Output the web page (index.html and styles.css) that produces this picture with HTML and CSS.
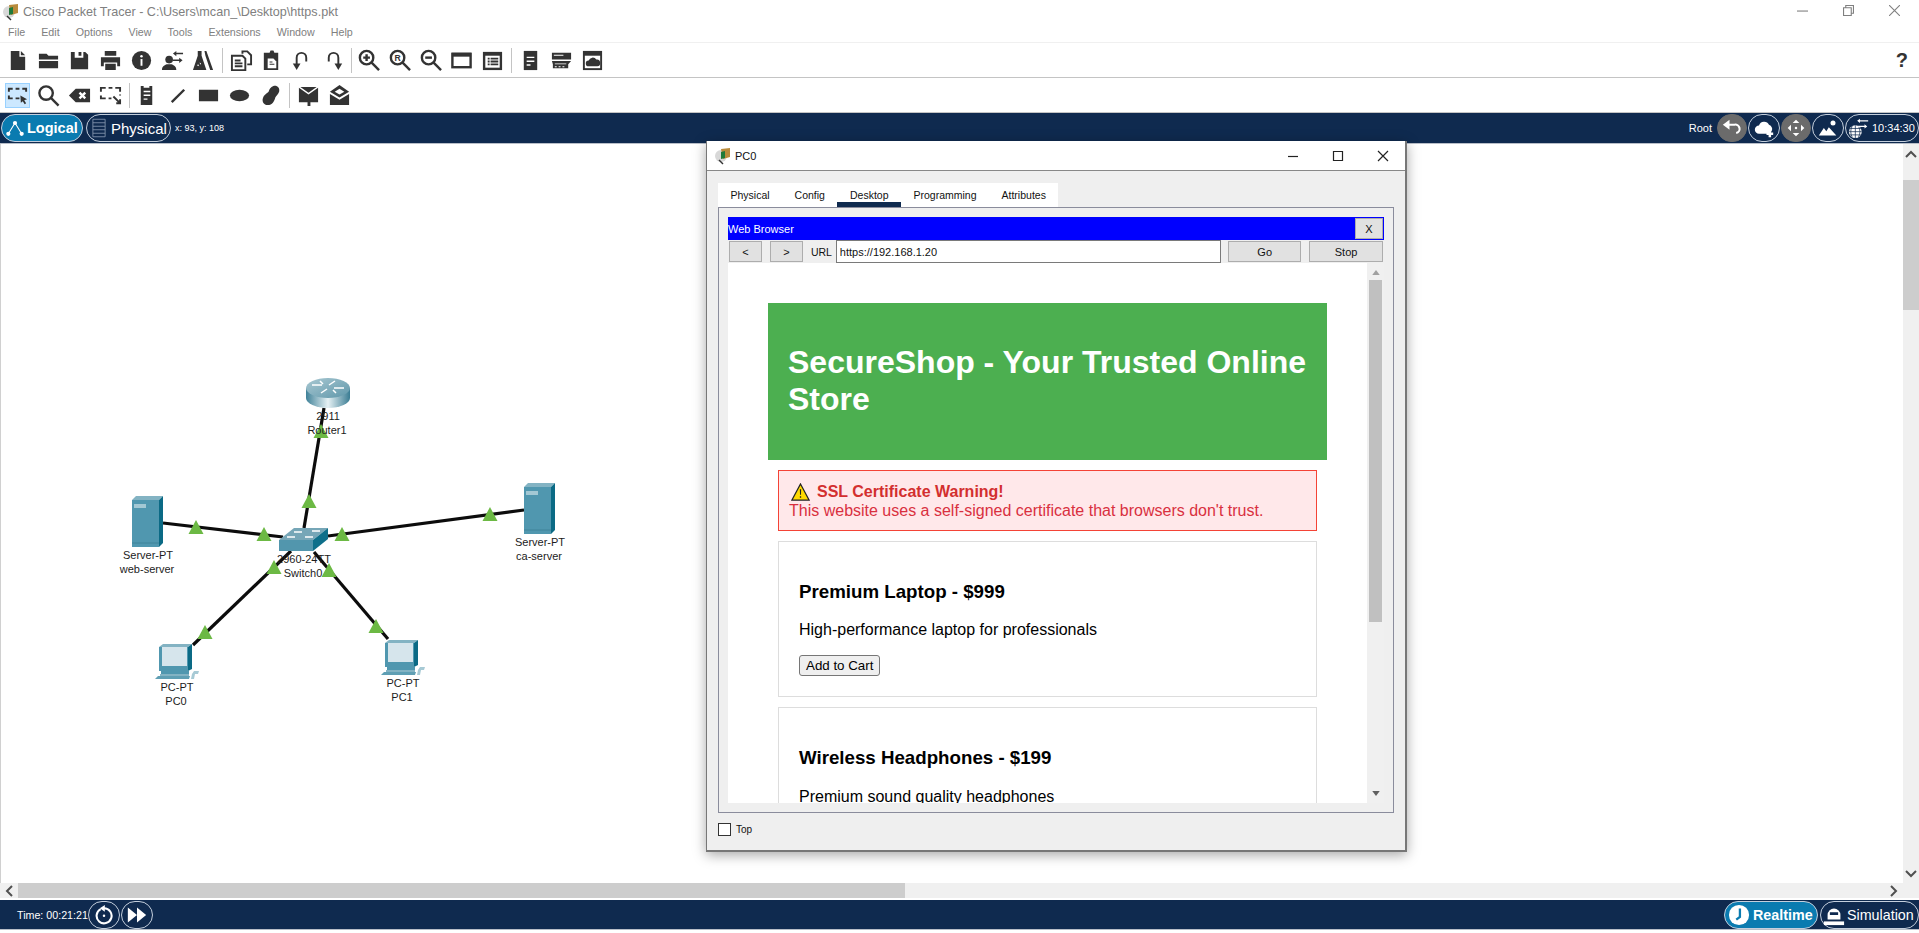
FILE: index.html
```html
<!DOCTYPE html>
<html lang="en">
<head>
    <meta charset="UTF-8">
    <title>Cisco Packet Tracer - https.pkt</title>
    <link rel="stylesheet" href="styles.css">
</head>
<body>

<div class="app">

    <div class="titlebar">
        <svg class="app-icon" viewBox="0 0 18 18">
            <circle cx="7" cy="9" r="6" fill="#d8d8d8"/>
            <path d="M7 2l9-1v9l-7 2z" fill="#b98b3c"/>
            <path d="M7 5l4-1v7l-4 1z" fill="#1f7a3a"/>
            <path d="M5 13l4 4" stroke="#333" stroke-width="1.5"/>
        </svg>
        <span class="app-title">Cisco Packet Tracer - C:\Users\mcan_\Desktop\https.pkt</span>
        <div class="win-controls">
            <svg viewBox="0 0 10 10"><path d="M0 5.5h10"/></svg>
            <svg viewBox="0 0 10 10"><path d="M.5 2.5h7v7h-7zM2.5 2.5v-2h7v7h-2"/></svg>
            <svg viewBox="0 0 10 10"><path d="M0 0l10 10M10 0L0 10"/></svg>
        </div>
    </div>

    <nav class="menubar">
        <span>File</span><span>Edit</span><span>Options</span><span>View</span><span>Tools</span><span>Extensions</span><span>Window</span><span>Help</span>
    </nav>

    <div class="toolbar">
        <span class="tool"><svg viewBox="0 0 24 24"><path d="M5 2h9v6h6v14H5zM15.500 2l4.500 4.500h-4.500z"/></svg></span>
        <span class="tool"><svg viewBox="0 0 24 24"><path d="M2 5h8l2 2h10v4H2zM2 12.500h20V20H2z"/></svg></span>
        <span class="tool"><svg viewBox="0 0 24 24"><path d="M3 3h4v6h9V3h2l3 3v15H3zM11 3h3v4h-3z"/></svg></span>
        <span class="tool"><svg viewBox="0 0 24 24"><path d="M6 2h12v5H6zM2 8.500h20V18h-3v-4H5v4H2zM6.500 15.500h11V22h-11z"/></svg></span>
        <span class="tool"><svg viewBox="0 0 24 24"><circle cx="12" cy="12" r="10"/><rect class="w" x="11" y="10.500" width="2" height="7"/><circle class="w" cx="12" cy="7.500" r="1.300"/></svg></span>
        <span class="tool"><svg viewBox="0 0 24 24"><circle cx="8.500" cy="11" r="4"/><path d="M1 22c0-4 3-5 5-6h5c2 1 5 2 5 6zM16 2v2h7v1.500h-7v2l-3.500-2.700zM19 9v2h-7v1.500h7v2l3.500-2.700z"/></svg></span>
        <span class="tool"><svg viewBox="0 0 24 24"><path d="M6 2h4v5l5 15H1l5-15zM13 2h2l7 20h-3L14 7z"/><path class="w" d="M5 17l1.500-1 1 2zM8 14l1.500 1-1 1.500z"/></svg></span>
        <span class="sep"></span>
        <span class="tool"><svg class="ln thin" viewBox="0 0 24 24"><path d="M13 5V2.500h5l4 4V16h-4M2 7h11l3 3v12H2z"/><path d="M5 12h6M5 15h8M5 18h8"/></svg></span>
        <span class="tool narrow"><svg viewBox="0 0 24 24"><path d="M7 4h3l1-2.500h3l1 2.500h4v18H4V4z"/><path class="w" d="M8 10h6l3 3v7H8z"/><path d="M10 13h3v1h-3zM10 15.500h5v1h-5z"/></svg></span>
        <span class="tool narrow"><svg class="ln thin" viewBox="0 0 24 24"><path d="M18 13V9a5 5 0 0 0-10 0v7"/><path class="f" d="M4 15h8l-4 7z"/></svg></span>
        <span class="tool redo"><svg class="ln thin" viewBox="0 0 24 24"><path d="M6 13V9a5 5 0 0 1 10 0v7"/><path class="f" d="M12 15h8l-4 7z"/></svg></span>
        <span class="sep sep-tight"></span>
        <span class="tool"><svg class="ln" viewBox="0 0 24 24"><circle cx="10" cy="9" r="7"/><path d="M15 14l8 8"/><path d="M6.500 9h7M10 5.500v7"/></svg></span>
        <span class="tool"><svg class="ln" viewBox="0 0 24 24"><circle cx="10" cy="9" r="7"/><path d="M15 14l8 8"/><text class="tool-r" x="10" y="12.500" text-anchor="middle">R</text></svg></span>
        <span class="tool"><svg class="ln" viewBox="0 0 24 24"><circle cx="10" cy="9" r="7"/><path d="M15 14l8 8"/><path d="M6.500 9h7"/></svg></span>
        <span class="tool"><svg class="ln" viewBox="0 0 24 24"><rect x="2.500" y="5" width="19" height="14"/><path d="M2 6h20" stroke-width="4"/></svg></span>
        <span class="tool"><svg viewBox="0 0 24 24"><path d="M2 3h20v19H2z"/><path class="w" d="M4.500 7h15v12.500h-15z"/><path d="M7 9h2v2H7zM7 12h2v2H7zM7 15h2v2H7zM10 9h8v2h-8zM10 12h8v2h-8zM10 15h8v2h-8z"/></svg></span>
        <span class="sep"></span>
        <span class="tool"><svg viewBox="0 0 24 24"><path d="M5 2h14v20H5z"/><path class="w" d="M8 8h8v1.500H8zM8 12h8v1.500H8zM8 16h4v1.500H8z"/></svg></span>
        <span class="tool"><svg viewBox="0 0 24 24"><path d="M2 4h20v7H2zM2 12.500h20L19 16v4H3v-4z"/><path class="w" d="M4 6h10v1H4zM5 15h12v1H5zM5 18h2v1H5zM9 18h2v1H9zM13 18h2v1h-2z"/></svg></span>
        <span class="tool"><svg viewBox="0 0 24 24"><path d="M2 2h20v20H2z"/><path class="w" d="M4 7h16v13H4z"/><path d="M8 18a3 3 0 0 1 0-6 4.500 4.500 0 0 1 8-1 3.500 3.500 0 0 1 1 7z"/></svg></span>
        <span class="help">?</span>
    </div>

    <div class="toolbar">
        <span class="tool active"><svg class="ln thin" viewBox="0 0 24 24"><path d="M3 8V5h4M10 5h4M17 5h4v3M3 12v3h4M10 15h4"/><path class="f" d="M15 12l7 4-3 1 2 3-1.500 1-2-3-2 1.500z"/></svg></span>
        <span class="tool"><svg class="ln" viewBox="0 0 24 24"><circle cx="9.500" cy="9.500" r="7"/><path d="M14.500 14.500l8 8"/></svg></span>
        <span class="tool"><svg viewBox="0 0 24 24"><path d="M8 5h15v14H8l-7-7z"/><path class="wl" d="M12 9l6 6M18 9l-6 6"/></svg></span>
        <span class="tool"><svg class="ln thin" viewBox="0 0 24 24"><path d="M2 8V4h5M10 4h4M17 4h5v4M2 12v3h5M10 15h3M22 11v1"/><path d="M15 13l7 7M18 20h4v-4"/></svg></span>
        <span class="sep sep-note"></span>
        <span class="tool"><svg viewBox="0 0 24 24"><path d="M6 2h3v2h6V2h3v20H6z"/><path class="w" d="M9 7h7v1.500H9zM9 11h7v1.500H9zM9 15h4v1.500H9z"/></svg></span>
        <span class="tool"><svg class="ln" viewBox="0 0 24 24"><path d="M6 19L19 6"/></svg></span>
        <span class="tool"><svg viewBox="0 0 24 24"><rect x="2" y="6" width="20" height="12"/></svg></span>
        <span class="tool"><svg viewBox="0 0 24 24"><ellipse cx="12" cy="12" rx="10" ry="6"/></svg></span>
        <span class="tool"><svg viewBox="0 0 24 24"><path d="M15 2c4-1 7 2 6 6-1 3-3 4-4 6-1 4-3 8-8 8-4 0-6-4-5-7 1-4 4-5 6-7 1-3 2-5 5-6z"/></svg></span>
        <span class="sep"></span>
        <span class="tool"><svg viewBox="0 0 24 24"><path d="M2 4l10 7 10-7v15H14v4h-3v-4H2zM3.500 3h17L12 9z"/></svg></span>
        <span class="tool"><svg viewBox="0 0 24 24"><path d="M12 1l10 7-10 6L2 8zM2 10.500l10 6 10-6V22H2z"/><path class="w" d="M12 5l5 3-5 3-5-3z"/></svg></span>
    </div>

    <div class="navbar">
        <div class="pill pill-on logical">
            <svg viewBox="0 0 24 24"><path class="nv-thin" d="M12 6L4 19M12 6l8 13"/><circle cx="12" cy="6" r="2.500"/><circle cx="4" cy="19" r="2.500"/><circle cx="20" cy="19" r="2.500"/></svg>
            <b>Logical</b>
        </div>
        <div class="pill physical">
            <svg viewBox="0 0 16 22"><path class="rack" d="M1 1h14v20H1zM1 5h14M1 9h14M1 13h14M1 17h14"/></svg>
            <span>Physical</span>
        </div>
        <span class="coords">x: 93, y: 108</span>
        <div class="nav-right">
            <span class="root">Root</span>
            <div class="round grey"><svg viewBox="0 0 24 24"><path class="nv" d="M5 8h10a5 5 0 0 1 2 10"/><path d="M9 2v12L1 8z"/></svg></div>
            <div class="round"><svg viewBox="0 0 24 24"><path d="M6 19a5 5 0 0 1 0-10 6.500 6.500 0 0 1 12-1 5.500 5.500 0 0 1 3 8l-3 3z"/><path class="wn" d="M19 15v8M15 19h8"/></svg></div>
            <div class="round grey"><svg viewBox="0 0 24 24"><path d="M12 2l4 4H8zM12 22l-4-4h8zM2 12l4-4v8zM22 12l-4 4V8z"/><circle cx="12" cy="12" r="1.500"/></svg></div>
            <div class="round"><svg viewBox="0 0 24 24"><circle cx="18" cy="6" r="3"/><path d="M1 21l6-9 3 4 3-5 9 10z"/></svg></div>
            <div class="round clock">
                <svg viewBox="0 0 24 24"><circle cx="8" cy="16" r="7"/><path class="gridline" d="M1 16h14M2 12.500h12M2 19.500h12M8 9v14M4.500 10c-2 4-2 8 0 12M11.500 10c2 4 2 8 0 12"/><path d="M13 2v1.500h9V5h-9v1.500L10 4zM18 8v1.500H11V11h7v1.500l3-2.200z"/></svg>
                <span>10:34:30</span>
            </div>
        </div>
    </div>

    <div class="workspace">
        <div class="canvas">
            <svg class="topology" viewBox="0 144 1902 739">
                <defs>
                    <linearGradient id="routerSide" x1="0" x2="1" y1="0" y2="0">
                        <stop offset="0" stop-color="#3f8198"/>
                        <stop offset="0.5" stop-color="#e6f1f4"/>
                        <stop offset="1" stop-color="#3a7c93"/>
                    </linearGradient>
                    <linearGradient id="routerTop" x1="0" x2="1" y1="0" y2="1">
                        <stop offset="0" stop-color="#a9c8d2"/>
                        <stop offset="1" stop-color="#5f97aa"/>
                    </linearGradient>
                    <g id="server">
                        <path d="M0 4h27v47H0z" fill="#5097af"/>
                        <path d="M0 4l4-4h27l-4 4z" fill="#83b3c3"/>
                        <path d="M27 4l4-4v47l-4 4z" fill="#0b6a85"/>
                        <rect x="2" y="8" width="12" height="4" fill="#a3c8d4"/>
                        <path d="M0 47h27" stroke="#3f8399"/>
                    </g>
                    <g id="pc">
                        <path d="M4 4h29v24H4z" fill="#5097af"/>
                        <path d="M4 4l4-3h29l-4 3z" fill="#83b3c3"/>
                        <path d="M33 4l4-3v25l-4 2z" fill="#0b6a85"/>
                        <rect x="7" y="4" width="25" height="19" fill="#d6e5ec"/>
                        <path d="M6 28h28v3H6z" fill="#5097af"/>
                        <path d="M5 31h29v3H5z" fill="#83b3c3"/>
                        <path d="M3 33h32l-1 3H0z" fill="#5f9fb4"/>
                        <path d="M39 28h5l-1 3h-3l-1 5h-3l1-5z" fill="#a7cad5"/>
                    </g>
                    <path id="link" d="M0 -7l7.500 14H-7.500z" fill="#6cb944"/>
                </defs>

                <g class="cables">
                    <path d="M323 408L303 528"/>
                    <path d="M162 523L282 537"/>
                    <path d="M523 510L327 536"/>
                    <path d="M192 645L290 551"/>
                    <path d="M387 639L313 552"/>
                </g>

                <g>
                    <path d="M305 388v10a22 10 0 0 0 44 0v-10z" fill="url(#routerSide)"/>
                    <ellipse cx="327" cy="388" rx="22" ry="10" fill="url(#routerTop)"/>
                    <path class="arrows" d="M311 385h10M334 381l-6 4M343 388h-10M320 393l6-4M319 381l3 3M335 393l-3-3"/>
                </g>
                <g>
                    <path d="M278 540l15-12h34l-15 12z" fill="#76a6b7"/>
                    <path d="M278 540h34v11h-34z" fill="#5296ad"/>
                    <path d="M312 540l15-12v11l-15 12z" fill="#0e6f8a"/>
                    <path class="arrows" d="M293 532h8M311 531h8M286 537h8M304 537h8"/>
                </g>
                <use href="#server" x="131" y="496"/>
                <use href="#server" x="523" y="483"/>
                <use href="#pc" x="154" y="643"/>
                <use href="#pc" x="380" y="639"/>

                <use href="#link" x="320" y="431"/>
                <use href="#link" x="308" y="501"/>
                <use href="#link" x="195" y="527"/>
                <use href="#link" x="263" y="534"/>
                <use href="#link" x="489" y="514"/>
                <use href="#link" x="341" y="534"/>
                <use href="#link" x="273" y="567"/>
                <use href="#link" x="328" y="570"/>
                <use href="#link" x="204" y="632"/>
                <use href="#link" x="375" y="626"/>

                <g class="labels">
                    <text x="327" y="420">2911</text>
                    <text x="326" y="434">Router1</text>
                    <text x="303" y="563">2960-24TT</text>
                    <text x="302" y="577">Switch0</text>
                    <text x="147" y="559">Server-PT</text>
                    <text x="146" y="573">web-server</text>
                    <text x="539" y="546">Server-PT</text>
                    <text x="538" y="560">ca-server</text>
                    <text x="176" y="691">PC-PT</text>
                    <text x="175" y="705">PC0</text>
                    <text x="402" y="687">PC-PT</text>
                    <text x="401" y="701">PC1</text>
                </g>
            </svg>
        </div>
        <div class="vscroll">
            <svg class="chev" viewBox="0 0 16 16"><path d="M3 11l5-5 5 5"/></svg>
            <div class="vthumb"></div>
            <svg class="chev chev-end" viewBox="0 0 16 16"><path d="M3 5l5 5 5-5"/></svg>
        </div>
    </div>

    <div class="hscroll">
        <svg class="chev" viewBox="0 0 16 16"><path d="M11 3L6 8l5 5"/></svg>
        <div class="hthumb"></div>
        <svg class="chev chev-right" viewBox="0 0 16 16"><path d="M5 3l5 5-5 5"/></svg>
    </div>

    <div class="statusbar">
        <span class="time">Time: 00:21:21</span>
        <div class="round sb-btn"><svg viewBox="0 0 24 24"><path class="nv" d="M8 5a9 9 0 1 0 4-1"/><path d="M13 0v8L7 4z"/><circle cx="12" cy="13" r="1.500"/></svg></div>
        <div class="round sb-btn"><svg viewBox="0 0 24 24"><path d="M1 3l11 9-11 9zM12 3l11 9-11 9z"/></svg></div>
        <div class="mode">
            <div class="pill pill-on realtime">
                <svg viewBox="0 0 24 24"><circle cx="12" cy="12" r="11"/><path class="clockhand" d="M13 5v9l-4 3"/></svg>
                <b>Realtime</b>
            </div>
            <div class="pill simulation">
                <svg viewBox="0 0 24 24"><path d="M5 12a7 7 0 0 1 14 0v5H5z"/><rect class="clockhand-fill" x="7.500" y="9" width="9" height="3"/><path d="M1 19h22v4H1z"/></svg>
                <span>Simulation</span>
            </div>
        </div>
    </div>

    <div class="bottom-edge"></div>

    <!-- PC0 window -->
    <section class="dialog">
        <div class="dialog-title">
            <svg class="app-icon" viewBox="0 0 18 18">
                <circle cx="7" cy="9" r="6" fill="#d8d8d8"/>
                <path d="M7 2l9-1v9l-7 2z" fill="#b98b3c"/>
                <path d="M7 5l4-1v7l-4 1z" fill="#1f7a3a"/>
                <path d="M5 13l4 4" stroke="#333" stroke-width="1.500"/>
            </svg>
            <span>PC0</span>
            <div class="dialog-controls">
                <svg viewBox="0 0 12 12"><path d="M1 6.500h10"/></svg>
                <svg viewBox="0 0 12 12"><path d="M1.500 1.500h9v9h-9z"/></svg>
                <svg viewBox="0 0 12 12"><path d="M1 1l10 10M11 1L1 11"/></svg>
            </div>
        </div>

        <div class="dialog-body">
            <div class="tabs">
                <span class="tab">Physical</span>
                <span class="tab">Config</span>
                <span class="tab tab-active">Desktop</span>
                <span class="tab">Programming</span>
                <span class="tab">Attributes</span>
            </div>

            <div class="panel">
                <div class="browser-head">
                    <span>Web Browser</span>
                    <button class="pt-btn close-btn">X</button>
                </div>
                <div class="url-row">
                    <button class="pt-btn nav-btn">&lt;</button>
                    <button class="pt-btn nav-btn">&gt;</button>
                    <label class="url-label">URL</label>
                    <input class="url-input" type="text" value="https://192.168.1.20">
                    <button class="pt-btn go-btn">Go</button>
                    <button class="pt-btn go-btn stop-btn">Stop</button>
                </div>

                <div class="view">
                    <div class="page">
                        <header class="shop-header">
                            <h1>SecureShop - Your Trusted Online Store</h1>
                        </header>

                        <div class="warning">
                            <div class="warning-head">
                                <svg viewBox="0 0 20 19"><path d="M10 1l9 17H1z" fill="#ffd900" stroke="#222" stroke-width="1.300"/><path d="M9.300 6.500h1.400l-.2 6h-1zM9.300 14h1.400v1.600H9.300z" fill="#222"/></svg>
                                <strong>SSL Certificate Warning!</strong>
                            </div>
                            This website uses a self-signed certificate that browsers don't trust.
                        </div>

                        <div class="product">
                            <h3>Premium Laptop - $999</h3>
                            <p>High-performance laptop for professionals</p>
                            <button>Add to Cart</button>
                        </div>

                        <div class="product">
                            <h3>Wireless Headphones - $199</h3>
                            <p>Premium sound quality headphones</p>
                        </div>
                    </div>
                    <div class="view-scroll">
                        <svg class="tri" viewBox="0 0 9 6"><path d="M4.500 0L9 6H0z"/></svg>
                        <div class="view-thumb"></div>
                        <svg class="tri tri-end" viewBox="0 0 9 6"><path d="M0 0h9L4.500 6z"/></svg>
                    </div>
                </div>
            </div>

            <div class="dialog-foot">
                <span class="check"></span>
                <span>Top</span>
            </div>
        </div>
    </section>
</div>

</body>
</html>
```

FILE: styles.css
```css
* {
    box-sizing: border-box;
}

body {
    margin: 0;
    font-family: "Liberation Sans", Arial, sans-serif;
    background-color: white;
    overflow: hidden;
}

.app {
    position: relative;
    display: flex;
    flex-direction: column;
    height: 933px;
    width: 1919px;
    overflow: hidden;
}

/* top window bar */
.titlebar {
    display: flex;
    align-items: center;
    height: 23px;
    padding-left: 2px;
    color: #808080;
    font-size: 12.6px;
    flex: none;
}

.app-icon {
    width: 18px;
    height: 18px;
    flex: none;
}

.app-title {
    margin-left: 3px;
}

.win-controls {
    margin-left: auto;
    display: flex;
    gap: 35px;
    padding-right: 19px;
    margin-top: -2px;
}

.win-controls svg {
    width: 11px;
    height: 11px;
    fill: none;
    stroke: #808080;
    stroke-width: 1;
}

.menubar {
    display: flex;
    gap: 16px;
    height: 20px;
    padding: 3px 0 0 8px;
    font-size: 10.7px;
    color: #808080;
    border-bottom: 1px solid #f0f0f0;
    flex: none;
}

/* toolbars */
.toolbar {
    display: flex;
    align-items: center;
    height: 35px;
    padding-left: 2px;
    border-bottom: 1px solid #c4c4c4;
    flex: none;
}

.tool {
    width: 31px;
    height: 25px;
    display: flex;
    align-items: center;
    justify-content: center;
    flex: none;
}

.tool.narrow {
    width: 29px;
}

.tool.redo {
    margin-left: 4px;
}

.tool svg {
    width: 23px;
    height: 23px;
    fill: #333;
}

.tool svg .w {
    fill: white;
}

.tool svg .wl {
    fill: none;
    stroke: white;
    stroke-width: 2.500;
}

.tool svg.ln {
    fill: none;
    stroke: #333;
    stroke-width: 2.500;
}

.tool svg.thin {
    stroke-width: 2;
}

.tool svg .f {
    fill: #333;
    stroke: none;
}

.tool-r {
    font-size: 9px;
    font-weight: bold;
    fill: #333;
    stroke: none;
}

.tool.active {
    width: 25px;
    margin: 0 3px;
    background-color: #cce8ff;
    border: 1px solid #99d1ff;
}

.sep {
    width: 1px;
    height: 25px;
    margin: 0 3px;
    background-color: #c4c4c4;
    flex: none;
}

.sep-tight {
    margin: 0 1px;
}

.sep-note {
    margin: 0 1px 0 3px;
}

.help {
    margin-left: auto;
    padding-right: 11px;
    font-size: 20px;
    font-weight: bold;
    color: #333;
}

/* navy bars */
.navbar {
    display: flex;
    align-items: center;
    height: 31px;
    background-color: #0f2a4f;
    border-bottom: 1px solid #b8bec8;
    color: white;
    flex: none;
    padding-left: 1px;
}

.pill {
    display: flex;
    align-items: center;
    height: 28px;
    border: 1px solid #c4cfdd;
    border-radius: 14px;
    font-size: 15px;
    flex: none;
}

.pill-on {
    background-color: #0a7bb0;
}

.pill svg {
    fill: white;
    flex: none;
}

.logical {
    width: 82px;
    padding-left: 3px;
    gap: 2px;
    font-size: 14.5px;
}

.logical svg {
    width: 20px;
    height: 20px;
}

.physical {
    width: 85px;
    margin-left: 3px;
    padding-left: 5px;
    gap: 5px;
}

.physical svg {
    width: 14px;
    height: 20px;
}

.rack {
    fill: none;
    stroke: #8294ad;
    stroke-width: 1;
}

.nv {
    fill: none;
    stroke: white;
    stroke-width: 2.500;
}

.nv-thin {
    fill: none;
    stroke: white;
    stroke-width: 1.300;
}

.coords {
    margin-left: 4px;
    font-size: 9px;
}

.nav-right {
    margin-left: auto;
    display: flex;
    align-items: center;
    gap: 1px;
}

.root {
    font-size: 11px;
    margin-right: 4px;
}

.round {
    display: flex;
    align-items: center;
    justify-content: center;
    width: 32px;
    height: 28px;
    border: 1px solid #c4cfdd;
    border-radius: 14px;
    flex: none;
}

.round svg {
    width: 20px;
    height: 20px;
    fill: white;
}

.round.grey {
    width: 30px;
    background-color: #6b6b6b;
    border-color: #6b6b6b;
}

.wn {
    fill: none;
    stroke: white;
    stroke-width: 3;
}

.clock {
    width: 74px;
    gap: 2px;
    font-size: 11px;
    padding-left: 2px;
    justify-content: flex-start;
}

.clock svg {
    width: 22px;
    height: 22px;
}

.gridline {
    fill: none;
    stroke: #0f2a4f;
    stroke-width: 0.800;
}

/* workspace */
.workspace {
    display: flex;
    height: 739px;
    flex: none;
}

.canvas {
    position: relative;
    flex: 1;
    background-color: white;
    border-left: 1px solid #d0d0d0;
}

.topology {
    display: block;
    width: 1902px;
    height: 739px;
}

.cables path {
    fill: none;
    stroke: #0c0c0c;
    stroke-width: 3.200;
}

.arrows {
    fill: none;
    stroke: white;
    stroke-width: 1.500;
}

.labels text {
    font-size: 11px;
    fill: #1c1c1c;
    text-anchor: middle;
}

.vscroll {
    display: flex;
    flex-direction: column;
    width: 16px;
    background-color: #f0f0f0;
    flex: none;
}

.chev {
    width: 16px;
    height: 16px;
    fill: none;
    stroke: #505050;
    stroke-width: 2;
    flex: none;
}

.vscroll .chev:first-child {
    margin-top: 2px;
}

.vthumb {
    margin-top: 18px;
    height: 130px;
    background-color: #cdcdcd;
}

.chev-end {
    margin-top: auto;
    margin-bottom: 1px;
}

.hscroll {
    display: flex;
    align-items: center;
    height: 15px;
    background-color: #f0f0f0;
    padding-left: 1px;
    flex: none;
}

.hthumb {
    width: 887px;
    height: 15px;
    margin-left: 1px;
    background-color: #cdcdcd;
}

.chev-right {
    margin-left: auto;
    margin-right: 17px;
}

.statusbar {
    display: flex;
    align-items: center;
    height: 29px;
    margin-top: 2px;
    padding-left: 17px;
    background-color: #0f2a4f;
    color: white;
    flex: none;
}

.time {
    width: 71px;
    font-size: 10.7px;
    white-space: nowrap;
    flex: none;
}

.sb-btn {
    width: 32px;
    margin-right: 1px;
}

.mode {
    margin-left: auto;
    display: flex;
    gap: 2px;
}

.realtime {
    width: 94px;
    padding-left: 3px;
    gap: 3px;
    font-size: 14.3px;
}

.realtime svg,
.simulation svg {
    width: 22px;
    height: 22px;
}

.clockhand {
    fill: none;
    stroke: #0a7bb0;
    stroke-width: 2.500;
}

.clockhand-fill {
    fill: #0f2a4f;
}

.simulation {
    width: 99px;
    padding-left: 2px;
    gap: 2px;
    font-size: 14.3px;
    white-space: nowrap;
}

.bottom-edge {
    flex: 1;
    border-top: 1px solid #b8bec8;
}

/* PC0 dialog */
.dialog {
    position: absolute;
    left: 706px;
    top: 141px;
    width: 701px;
    height: 711px;
    background-color: #efefef;
    border: 1px solid #777;
    border-width: 0 2px 2px 1px;
    border-top: none;
    box-shadow: 0 3px 12px rgba(0, 0, 0, 0.35);
    display: flex;
    flex-direction: column;
}

.dialog-title {
    display: flex;
    align-items: center;
    height: 30px;
    padding-left: 7px;
    gap: 3px;
    background-color: white;
    border-bottom: 1px solid #888;
    font-size: 11px;
    color: #111;
    flex: none;
}

.dialog-controls {
    margin-left: auto;
    display: flex;
    gap: 33px;
    padding-right: 16px;
}

.dialog-controls svg {
    width: 12px;
    height: 12px;
    fill: none;
    stroke: #222;
    stroke-width: 1.200;
}

.dialog-body {
    flex: 1;
    display: flex;
    flex-direction: column;
    padding: 12px 11px 0 11px;
}

.tabs {
    display: flex;
    align-self: flex-start;
    height: 24px;
    background-color: white;
    font-size: 10.5px;
    color: #111;
    flex: none;
}

.tab {
    display: flex;
    align-items: center;
    padding: 0 12.5px;
}

.tab-active {
    border-bottom: 5px solid #0f2a4f;
    padding-top: 5px;
}

.panel {
    height: 606px;
    padding: 9px;
    border: 1px solid #8a8c9c;
    display: flex;
    flex-direction: column;
    flex: none;
}

.browser-head {
    display: flex;
    align-items: center;
    justify-content: space-between;
    height: 23px;
    padding-right: 1px;
    background-color: #0000ff;
    color: white;
    font-size: 11px;
    flex: none;
}

.pt-btn {
    background-color: #e1e1e1;
    border: 1px solid #adadad;
    font-family: inherit;
    font-size: 11px;
    color: #111;
    padding: 0;
}

.close-btn {
    width: 28px;
    height: 21px;
}

.url-row {
    display: flex;
    align-items: center;
    height: 23px;
    gap: 8px;
    padding-left: 1px;
    padding-right: 1px;
    flex: none;
}

.nav-btn {
    width: 33px;
    height: 21px;
}

.url-label {
    width: 25px;
    font-size: 10.5px;
    color: #111;
    margin-right: -8px;
}

.url-input {
    width: 386px;
    height: 23px;
    padding: 0 3px;
    border: 1px solid #7a7a7a;
    font-family: inherit;
    font-size: 11px;
    color: #111;
    border-radius: 0;
    outline: none;
}

.go-btn {
    width: 73px;
    height: 21px;
}

.url-input + .go-btn {
    margin-left: -1px;
}

.stop-btn {
    width: 74px;
}

.view {
    display: flex;
    height: 540px;
    flex: none;
}

.page {
    width: 639px;
    height: 540px;
    padding: 40px 40px 0;
    background-color: white;
    color: black;
    overflow: hidden;
    flex: none;
}

.shop-header {
    padding: 20px;
    background-color: #4CAF50;
    color: white;
}

.shop-header h1 {
    margin: 21.440px 0;
    font-size: 32px;
}

.warning {
    margin: 10px;
    padding: 10px;
    background-color: #ffe8ea;
    border: 1px solid #f44336;
    color: #d9303f;
    font-size: 16px;
}

.warning-head {
    display: flex;
    align-items: center;
    height: 21px;
    padding: 2px 0 0 2px;
    gap: 7px;
}

.warning-head svg {
    width: 19px;
    height: 18px;
}

.warning-head strong {
    color: #d32f2f;
}

.product {
    margin: 10px;
    padding: 20px;
    border: 1px solid #ddd;
}

.product h3 {
    margin: 18.720px 0;
    font-size: 18.720px;
}

.product p {
    margin: 16px 0;
    font-size: 16px;
}

.product button {
    display: block;
    height: 21px;
    padding: 1px 6px;
    font-family: inherit;
    font-size: 13.333px;
    background-color: #efefef;
    border: 1px solid #767676;
    border-radius: 3px;
    color: black;
}

.view-scroll {
    display: flex;
    flex-direction: column;
    align-items: center;
    flex: 1;
    background-color: #f0f0f0;
}

.tri {
    width: 8px;
    height: 5px;
    margin-top: 7px;
    fill: #a0a0a0;
    flex: none;
}

.view-thumb {
    width: 13px;
    height: 342px;
    margin-top: 5px;
    background-color: #c0c0c0;
}

.tri-end {
    margin-top: auto;
    margin-bottom: 7px;
    fill: #606060;
}

.dialog-foot {
    display: flex;
    align-items: center;
    gap: 5px;
    margin-top: 10px;
    font-size: 10px;
    color: #111;
}

.check {
    width: 13px;
    height: 13px;
    background-color: white;
    border: 1px solid #333;
}
```
